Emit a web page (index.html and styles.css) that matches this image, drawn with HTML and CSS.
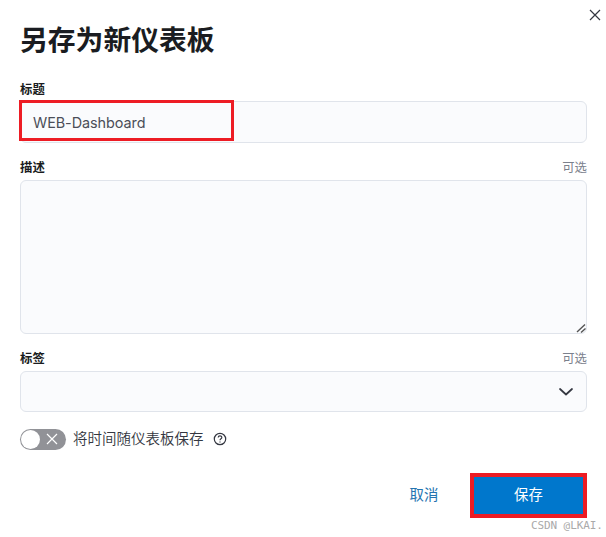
FILE: index.html
```
<!DOCTYPE html>
<html lang="zh-CN">
<head>
<meta charset="utf-8">
<title>另存为新仪表板</title>
<link rel="stylesheet" href="styles.css">
</head>
<body>
<main class="dialog">
  <button class="close" aria-label="关闭"><svg width="12" height="12" viewBox="0 0 12 12"><path d="M1 1l10 10M11 1L1 11"/></svg></button>
  <h1 class="title">另存为新仪表板</h1>
  <div class="field">
    <div class="label-row"><span class="label">标题</span></div>
    <div class="control"><span class="value">WEB-Dashboard</span><span class="highlight"></span></div>
  </div>
  <div class="field field-description">
    <div class="label-row"><span class="label">描述</span><span class="optional">可选</span></div>
    <div class="control area"><svg class="grip" width="10" height="10" viewBox="0 0 10 10"><path d="M1 9L9 1.500M5 9.500L9.500 5.500"/></svg></div>
  </div>
  <div class="field">
    <div class="label-row"><span class="label">标签</span><span class="optional">可选</span></div>
    <div class="control select"><svg width="14" height="9" viewBox="0 0 14 9"><path d="M1 2L7 7.500l6-5.500"/></svg></div>
  </div>
  <div class="switch-row">
    <span class="switch"><span class="thumb"></span><svg width="12" height="12" viewBox="0 0 12 12"><path d="M1 1l10 10M11 1L1 11"/></svg></span>
    <span class="switch-label">将时间随仪表板保存</span>
    <svg class="help" width="14" height="14" viewBox="0 0 14 14"><circle cx="7" cy="7" r="5.700"/><path d="M5.200 5.600C5.200 3.300 8.800 3.300 8.800 5.500C8.800 6.900 7 6.700 7 8.300M7 9.400v1.200"/></svg>
  </div>
  <div class="actions">
    <button class="cancel">取消</button>
    <button class="save">保存</button>
  </div>
  <span class="watermark">CSDN @LKAI.</span>
</main>
</body>
</html>
```
FILE: styles.css
```
* { box-sizing: border-box; }
body {
  margin: 0;
  background: #fff;
  color: #343741;
  font-family: Inter, "Noto Sans CJK SC", sans-serif;
}
button { font-family: inherit; border: 0; padding: 0; background: none; }
svg { display: block; fill: none; stroke: #343741; flex: none; }
.dialog { position: relative; height: 537px; padding: 22px 19px 0 20px; overflow: hidden; }
.close { position: absolute; top: 9px; right: 5px; }
.close svg { stroke-width: 1.2; }
.title {
  margin: 0 0 23px;
  height: 36px;
  line-height: 36px;
  font-size: 27.8px;
  font-weight: 700;
  color: #1a1c21;
}
.field { margin-bottom: 16px; }
.label-row {
  display: flex;
  justify-content: space-between;
  height: 18px;
  line-height: 18px;
  margin-bottom: 2px;
  font-size: 12.4px;
}
.field-description .label-row, .field-description + .field .label-row { margin-bottom: 3px; }
.label { font-weight: 700; color: #1a1c21; }
.optional { color: #7b818d; font-weight: 400; }
.control {
  position: relative;
  display: flex;
  align-items: center;
  height: 42px;
  padding: 0 12px;
  border: 1px solid #e0e4eb;
  border-radius: 6px;
  background: #fafbfd;
}
.value { font-size: 14.4px; letter-spacing: -0.05px; color: #4b4e58; }
.highlight {
  position: absolute;
  left: -2px;
  top: -2px;
  width: 215px;
  height: 41px;
  border: 3px solid #ed1c24;
}
.area { height: 154px; }
.grip { position: absolute; right: 0; bottom: 0; stroke: #555; stroke-width: 1.4; }
.select { height: 41px; padding-right: 13px; justify-content: flex-end; }
.select svg { stroke-width: 1.7; stroke-linecap: round; stroke-linejoin: round; }
.switch-row { display: flex; align-items: center; height: 20px; margin-top: 17px; }
.switch {
  display: flex;
  align-items: center;
  justify-content: space-between;
  width: 46px;
  height: 21px;
  padding: 0 8px 0 1px;
  border-radius: 11px;
  background: #919297;
}
.switch svg { stroke: #fff; stroke-width: 1.2; }
.thumb { width: 19px; height: 19px; border-radius: 50%; background: #fff; }
.switch-label { margin-left: 7px; font-size: 14.5px; line-height: 20px; font-weight: 350; }
.help { margin-left: 9px; stroke-width: 1.2; }
.actions { display: flex; justify-content: flex-end; margin-top: 24px; height: 45px; }
.cancel, .save { padding-bottom: 2px; font-size: 14.4px; font-weight: 400; line-height: 20px; }
.cancel { width: 92px; color: #2474b0; }
.save { width: 117px; border: 4px solid #ed1c24; background: #0077cc; color: #fff; }
.watermark {
  position: absolute;
  left: 531px;
  top: 519px;
  font: 11px/14px "DejaVu Sans Mono", monospace;
  letter-spacing: -0.1px;
  color: #aaa;
}
```
